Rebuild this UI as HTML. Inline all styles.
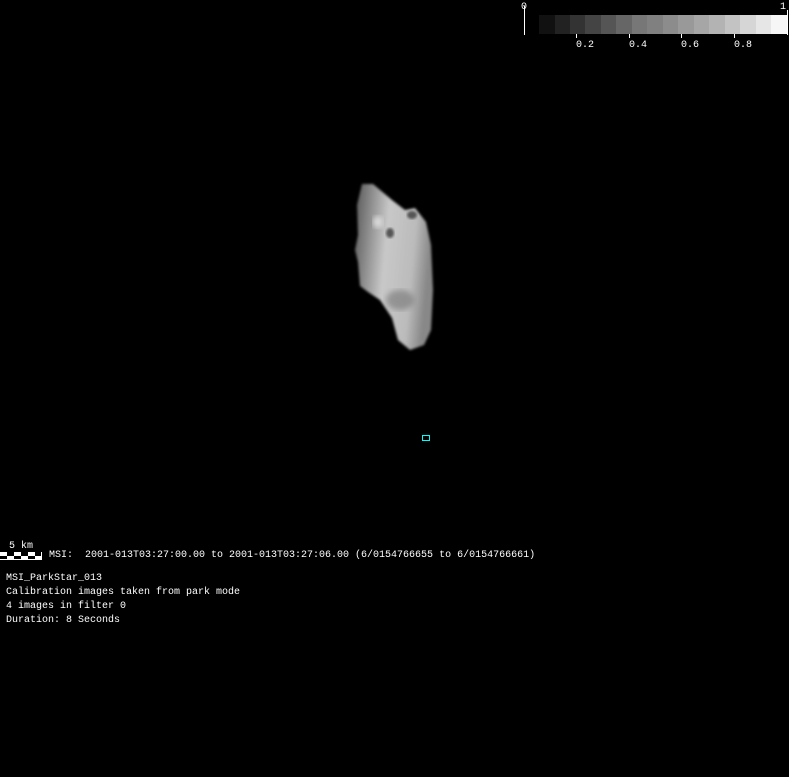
<!DOCTYPE html>
<html><head><style>
body{margin:0;background:#000;width:789px;height:777px;overflow:hidden;position:relative;font-family:"Liberation Mono",monospace;font-size:10px;color:#fff}
.t{position:absolute;white-space:pre;line-height:14px}
</style></head><body>
<svg width="789" height="777" style="position:absolute;left:0;top:0">
<defs>
<linearGradient id="g" x1="0" y1="0" x2="1" y2="0.2">
<stop offset="0" stop-color="#555"/><stop offset="0.45" stop-color="#c8c8c8"/><stop offset="0.8" stop-color="#bbb"/><stop offset="1" stop-color="#888"/>
</linearGradient>
<filter id="b"><feGaussianBlur stdDeviation="1.2"/></filter>
<filter id="b2"><feGaussianBlur stdDeviation="3"/></filter>
</defs>
<line x1="524.5" y1="6" x2="524.5" y2="35" stroke="#fff"/>
<g>
<rect x="539" y="15" width="16" height="19" fill="#111"/>
<rect x="555" y="15" width="15" height="19" fill="#222"/>
<rect x="570" y="15" width="15" height="19" fill="#333"/>
<rect x="585" y="15" width="16" height="19" fill="#444"/>
<rect x="601" y="15" width="15" height="19" fill="#555"/>
<rect x="616" y="15" width="16" height="19" fill="#666"/>
<rect x="632" y="15" width="15" height="19" fill="#777"/>
<rect x="647" y="15" width="16" height="19" fill="#808080"/>
<rect x="663" y="15" width="15" height="19" fill="#8c8c8c"/>
<rect x="678" y="15" width="16" height="19" fill="#999"/>
<rect x="694" y="15" width="15" height="19" fill="#a6a6a6"/>
<rect x="709" y="15" width="16" height="19" fill="#b3b3b3"/>
<rect x="725" y="15" width="15" height="19" fill="#c3c3c3"/>
<rect x="740" y="15" width="16" height="19" fill="#d6d6d6"/>
<rect x="756" y="15" width="15" height="19" fill="#e6e6e6"/>
<rect x="771" y="15" width="17" height="19" fill="#f6f6f6"/>
</g>
<line x1="787.5" y1="10" x2="787.5" y2="35" stroke="#fff"/>
<g stroke="#fff"><line x1="576.5" y1="34" x2="576.5" y2="38"/><line x1="629.5" y1="34" x2="629.5" y2="38"/><line x1="681.5" y1="34" x2="681.5" y2="38"/><line x1="734.5" y1="34" x2="734.5" y2="38"/></g>
<path d="M362,184 L373,184 L392,200 L405,210 L415,208 L426,222 L431,245 L433,290 L431,330 L424,345 L410,350 L398,340 L392,318 L380,300 L368,292 L360,286 L358,262 L355,250 L358,235 L357,205 Z" fill="url(#g)" filter="url(#b)"/>
<ellipse cx="390" cy="233" rx="4" ry="5" fill="#555" filter="url(#b)"/>
<ellipse cx="378" cy="222" rx="5" ry="6" fill="#ddd" filter="url(#b2)"/>
<ellipse cx="412" cy="215" rx="5" ry="4" fill="#555" filter="url(#b)"/>
<ellipse cx="400" cy="300" rx="14" ry="10" fill="#666" opacity=".5" filter="url(#b2)"/>
<rect x="422.5" y="435.5" width="7" height="5" fill="none" stroke="#0ff"/>
<rect x="0" y="552" width="42" height="8" fill="#fff"/>
<g fill="#000"><rect x="7" y="552" width="7" height="4"/><rect x="21" y="552" width="7" height="4"/><rect x="35" y="552" width="6" height="4"/><rect x="0" y="556" width="7" height="3"/><rect x="14" y="556" width="7" height="3"/><rect x="28" y="556" width="7" height="3"/></g>
</svg>
<div class="t" style="left:521px;top:1px">0</div>
<div class="t" style="left:780px;top:1px">1</div>
<div class="t" style="left:576px;top:39px">0.2</div>
<div class="t" style="left:629px;top:39px">0.4</div>
<div class="t" style="left:681px;top:39px">0.6</div>
<div class="t" style="left:734px;top:39px">0.8</div>
<div class="t" style="left:9px;top:540px">5 km</div>
<div class="t" style="left:49px;top:549px">MSI:  2001-013T03:27:00.00 to 2001-013T03:27:06.00 (6/0154766655 to 6/0154766661)</div>
<div class="t" style="left:6px;top:572px">MSI_ParkStar_013
Calibration images taken from park mode
4 images in filter 0
Duration: 8 Seconds</div>
</body></html>
